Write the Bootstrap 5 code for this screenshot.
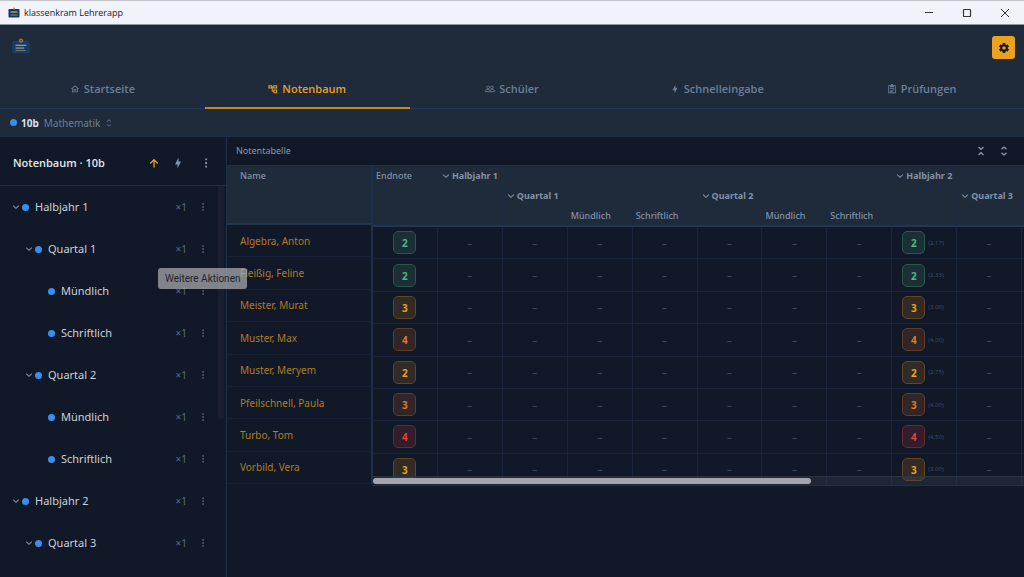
<!DOCTYPE html>
<html lang="de">
<head>
<meta charset="utf-8">
<meta name="viewport" content="width=device-width, initial-scale=1">
<title>klassenkram Lehrerapp</title>
<link href="https://cdn.jsdelivr.net/npm/bootstrap@5.3.0/dist/css/bootstrap.min.css" rel="stylesheet">
<style>
  :root { --bar:#1f2a3a; --ink:#111827; --line:#1d2f4b; --cell:#162135; --muted:#6b7f99; --amber:#e9a11f; --blue:#398feb; }
  body { font-family:"Noto Sans","Open Sans",sans-serif; font-size:11px; line-height:16px; background:var(--ink); color:#cbd1da; }
  .ic { width:12px; height:12px; fill:currentColor; flex:none; display:block; }
  .ic-md { width:10px; height:10px; }
  .ic-sm { width:8px; height:8px; }
  .ghost { background:none; border:0; padding:0; color:inherit; display:flex; align-items:center; justify-content:center; }
  .titlebar { height:25px; background:#f0f3f9; border-top:1px solid #c3c5cb; border-bottom:1px solid #8b9a9f; color:#222; font-family:"Open Sans",sans-serif; font-size:9px; }
  .titlebar .ghost { width:38px; height:22px; color:#333; }
  .topbar, .context { background:var(--bar); }
  .topbar { height:45px; padding:0 9px 0 12px; }
  .gear { width:23px; height:23px; border-radius:3px; background:var(--amber); color:#17191c; padding:0; border:0; }
  .tabs { background:var(--bar); height:39px; border-bottom:1px solid #24345a; }
  .tabs .nav-link { height:39px; padding:1px 0 0; border-bottom:2px solid transparent; border-radius:0; color:var(--muted); font-size:11px; line-height:16px; font-weight:600; gap:4px; font-family:"Open Sans",sans-serif; }
  .tabs .nav-link.active { color:var(--amber); border-color:#c48a1e; }
  .context { height:28px; border-bottom:1px solid var(--line); padding:0 10px; color:var(--muted); font-size:10px; }
  .context strong { color:#dde2ea; }
  .context .ghost { gap:5px; }
  .context .ic { color:#4a5c74; }
  .dot { width:7px; height:7px; border-radius:50%; background:var(--blue); flex:none; }
  .side { width:227px; flex:none; border-right:1px solid var(--line); }
  .side-head { height:49px; border-bottom:1px solid var(--line); padding:3px 8px 0 13px; }
  .side-head h1 { font-size:11px; line-height:16px; font-weight:600; color:#e3e7ed; font-family:"Open Sans",sans-serif; }
  .side-head .ghost { width:24px; height:24px; color:#7f93ab; }
  .side-head .go-up { color:var(--amber); }
  .tree .node { height:42px; padding:0 15px 0 10px; }
  .tree .lvl1 { padding-left:23px; } .tree .lvl2 { padding-left:36px; }
  .tree .fold { width:12px; height:16px; color:#8395ac; }
  .tree .label { margin-left:6px; }
  .weight { color:#5a6c84; font-size:10px; }
  .tree .more { width:16px; height:16px; color:#5a6c84; margin-left:8px; }
  .track { right:2px; top:0; width:6px; height:233px; border-radius:0 0 3px 3px; background:#191f2e; }
  .tip { left:158px; top:131px; height:21px; padding:0 7px; border-radius:3px; background:rgba(176,177,182,.7); color:#22252c; font-family:Roboto,sans-serif; line-height:22px; font-size:10px; z-index:5; white-space:nowrap; }
  .board-head { height:28px; padding:0 9px; color:#8797ad; font-size:9px; }
  .board-head .ghost { width:23px; height:20px; }
  .grades { border-collapse:separate; border-spacing:0; }
  .grades th { font-weight:500; font-size:9px; line-height:12px; color:#8292a9; background:var(--bar); padding:0 3px; white-space:nowrap; }
  .names { width:146px; height:319px; border-top:1px solid var(--line); border-right:2px solid var(--line); }
  .names th.head { height:59px; vertical-align:top; padding:4px 13px; border-bottom:2px solid #23364f; }
  .names td { border-bottom:1px solid var(--cell); padding:0 13px; font-size:10px; line-height:16px; color:#b07d22; }
  .names a { color:inherit; text-decoration:none; }
  .marks { table-layout:fixed; width:714px; height:321px; border-top:1px solid var(--line); }
  .marks th { height:20px; border-right:1px solid #1d2940; border-bottom:1px solid #1d2940; }
  .marks thead tr:last-child th { border-bottom:2px solid #20355c; height:21px; }
  .marks td { border-right:1px solid #18243b; border-bottom:1px solid #18243b; padding:0; font-size:10px; line-height:12px; color:#3c4d64; text-align:center; }
  .marks th .ghost { font-weight:700; gap:2px; padding-left:1px; }
  .grade { width:23px; height:23px; border:1px solid; border-radius:5px; font-size:10px; line-height:23px; font-weight:700; text-align:center; }
  .withavg { padding-left:10px; gap:3px; font-size:6px; }
  .g2 { color:#4bb980; background:#1c2f37; border-color:#255a4a; }
  .g3 { color:#e9a11f; background:#322a25; border-color:#5f4521; }
  .g4 { color:#e07a24; background:#322528; border-color:#633a26; }
  .g5 { color:#de4545; background:#321d2a; border-color:#642a35; }
  .hscroll { left:0; right:0; bottom:0; height:10px; background:rgba(70,80,92,.28); border-top:1px solid #2c3441; }
  .hscroll div { width:438px; height:6px; margin-top:1px; border-radius:3px; background:#a3a6b0; }
</style>
<script src="https://cdn.jsdelivr.net/npm/bootstrap@5.3.0/dist/js/bootstrap.bundle.min.js"></script>
</head>
<body class="d-flex flex-column vh-100 overflow-hidden">
<svg class="d-none">
  <symbol id="home" viewBox="0 0 24 24"><path d="M12 5.700l5 4.500V18h-2v-6H9v6H7v-7.800L12 5.700M12 3L2 12h3v8h6v-6h2v6h6v-8h3L12 3z"/></symbol>
  <symbol id="tree" viewBox="0 0 24 24"><path fill-rule="evenodd" d="M1 3h9v3h3V3h9v8h-9V8.500h-1.500V16H13v-3h9v9h-9v-3.500H9V11H1zm3 2.500v3h3.500v-3zm11.500 0v3h4v-3zm0 10v4h4v-4z"/></symbol>
  <symbol id="people" viewBox="0 0 24 24"><g fill="none" stroke="currentColor" stroke-width="2"><circle cx="7.500" cy="8" r="3.200"/><circle cx="16.500" cy="8" r="3.200"/><path d="M1 18.500v-1.500c0-2.500 3-3.800 6-3.800s4.500 1 5 2.300c.5-1.300 2-2.300 5-2.300s6 1.300 6 3.800v1.500zM12 15.500v3"/></g></symbol>
  <symbol id="bolt" viewBox="0 0 24 24"><path d="M11 15H6l7-14v8h5l-7 14z"/></symbol>
  <symbol id="clip" viewBox="0 0 24 24"><path fill-rule="evenodd" d="M3 3h6a3 3 0 0 1 6 0h6v19H3zm2 2v15h14V5h-2v3H7V5zm2 5h10v2H7zm0 3.500h10v2H7zM7 17h7v1.500H7z"/></symbol>
  <symbol id="gear" viewBox="0 0 24 24"><path d="M12 15.500A3.500 3.500 0 0 1 8.500 12 3.500 3.500 0 0 1 12 8.500a3.500 3.500 0 0 1 3.500 3.500 3.500 3.500 0 0 1-3.500 3.500m7.430-2.530c.04-.32.07-.64.07-.97 0-.33-.03-.66-.07-1l2.110-1.630c.19-.15.24-.42.12-.64l-2-3.460c-.12-.22-.39-.31-.61-.22l-2.490 1c-.52-.39-1.060-.73-1.690-.98l-.37-2.650A.506.506 0 0 0 14 2h-4c-.25 0-.46.18-.5.42l-.37 2.650c-.63.25-1.170.59-1.690.98l-2.490-1c-.22-.09-.49 0-.61.22l-2 3.460c-.13.22-.07.49.12.64L4.570 11c-.04.34-.07.67-.07 1 0 .33.03.65.07.97l-2.110 1.660c-.19.15-.25.42-.12.64l2 3.460c.12.22.39.3.61.22l2.490-1.010c.52.4 1.060.74 1.690.99l.37 2.650c.04.24.25.42.5.42h4c.25 0 .46-.18.5-.42l.37-2.650c.63-.26 1.170-.59 1.690-.99l2.490 1.010c.22.08.49 0 .61-.22l2-3.460c.12-.22.07-.49-.12-.64l-2.110-1.660z"/></symbol>
  <symbol id="up" viewBox="0 0 24 24"><path d="M13.300 21h-2.600V8.500l-5.300 5.300L3.500 12 12 3.500l8.500 8.500-1.900 1.800-5.300-5.300z"/></symbol>
  <symbol id="dots" viewBox="0 0 24 24"><path d="M10 1h4.500v4.500H10zM10 9.700h4.500v4.500H10zM10 18.400h4.500v4.500H10z"/></symbol>
  <symbol id="down" viewBox="0 0 24 24"><path fill="none" stroke="currentColor" stroke-width="3.200" d="M3.500 8l8.500 8 8.500-8"/></symbol>
  <symbol id="expand" viewBox="0 0 24 24"><path fill="none" stroke="currentColor" stroke-width="3.200" d="M6 7.500l6-5 6 5M6 16.500l6 5 6-5"/></symbol>
  <symbol id="collapse" viewBox="0 0 24 24"><path fill="none" stroke="currentColor" stroke-width="3.200" d="M6 2.500l6 5.500 6-5.500M6 21.500l6-5.500 6 5.500"/></symbol>
  <symbol id="logo" viewBox="0 0 20 20"><rect x="1" y="5" width="18" height="12.500" rx="1.200" fill="#193a5e" stroke="#1d4f7c" stroke-width=".7"/><path d="M4 9.200h12M4 12.300h9.500" stroke="#b9c5d3" stroke-width="1"/><path d="M4 15h11" stroke="#8f8064" stroke-width="1"/><circle cx="10" cy="4" r="1.800" fill="#5c5236" stroke="#c18e2c"/></symbol>
  <symbol id="minilogo" viewBox="0 0 12 12"><rect x=".5" y="2" width="11" height="8.500" rx=".8" fill="#173762"/><path d="M2.500 5h7" stroke="#c4d0df"/><path d="M2.500 8h7" stroke="#c99a3d" stroke-width=".8"/><circle cx="6" cy="1.500" r="1.100" fill="#dba133"/></symbol>
</svg>

<header>
  <div class="titlebar d-flex align-items-center ps-1">
    <svg class="ic ms-1 me-1"><use href="#minilogo"/></svg><span>klassenkram Lehrerapp</span>
    <div class="d-flex ms-auto">
      <button class="ghost" aria-label="Minimieren"><svg class="ic" viewBox="0 0 12 12"><path d="M2 5.500h8" stroke="currentColor"/></svg></button>
      <button class="ghost" aria-label="Maximieren"><svg class="ic" viewBox="0 0 12 12"><rect x="2.500" y="2.500" width="7" height="7" rx=".5" fill="none" stroke="currentColor" stroke-width="1.200"/></svg></button>
      <button class="ghost" aria-label="Schließen"><svg class="ic" viewBox="0 0 12 12"><path d="M2 2l8 8M10 2l-8 8" stroke="currentColor"/></svg></button>
    </div>
  </div>
  <div class="topbar d-flex align-items-center justify-content-between">
    <svg width="18" height="18" class="mb-1"><use href="#logo"/></svg>
    <button class="gear d-flex align-items-center justify-content-center" aria-label="Einstellungen"><svg class="ic"><use href="#gear"/></svg></button>
  </div>
  <nav class="tabs nav nav-justified flex-nowrap">
    <a class="nav-link d-flex align-items-center justify-content-center" href="#"><svg class="ic ic-md"><use href="#home"/></svg>Startseite</a>
    <a class="nav-link active d-flex align-items-center justify-content-center" href="#" aria-current="page"><svg class="ic ic-md"><use href="#tree"/></svg>Notenbaum</a>
    <a class="nav-link d-flex align-items-center justify-content-center" href="#"><svg class="ic ic-md"><use href="#people"/></svg>Schüler</a>
    <a class="nav-link d-flex align-items-center justify-content-center" href="#"><svg class="ic ic-md"><use href="#bolt"/></svg>Schnelleingabe</a>
    <a class="nav-link d-flex align-items-center justify-content-center" href="#"><svg class="ic ic-md"><use href="#clip"/></svg>Prüfungen</a>
  </nav>
  <div class="context d-flex align-items-center">
    <span class="dot me-1"></span><button class="ghost"><strong>10b</strong><span>Mathematik</span><svg class="ic ic-sm"><use href="#expand"/></svg></button>
  </div>
</header>

<main class="d-flex flex-grow-1 overflow-hidden position-relative">
  <aside class="side">
    <div class="side-head d-flex align-items-center">
      <h1 class="m-0 me-auto">Notenbaum · 10b</h1>
      <button class="ghost go-up" aria-label="Nach oben"><svg class="ic"><use href="#up"/></svg></button>
      <button class="ghost" aria-label="Schnelleingabe"><svg class="ic"><use href="#bolt"/></svg></button>
      <button class="ghost ms-1" aria-label="Weitere Aktionen"><svg class="ic ic-md"><use href="#dots"/></svg></button>
    </div>
    <div class="position-relative">
      <ul class="tree list-unstyled m-0" id="tree-list"></ul>
      <div class="track position-absolute"></div>
    </div>
  </aside>
  <section class="flex-grow-1 overflow-hidden">
    <div class="board-head d-flex align-items-center">
      <span class="me-auto">Notentabelle</span>
      <button class="ghost" aria-label="Alle einklappen"><svg class="ic ic-md"><use href="#collapse"/></svg></button>
      <button class="ghost" aria-label="Alle ausklappen"><svg class="ic ic-md"><use href="#expand"/></svg></button>
    </div>
    <div class="d-flex align-items-start">
      <table class="grades names flex-shrink-0"><thead><tr><th class="head">Name</th></tr></thead><tbody id="name-rows"></tbody></table>
      <div class="position-relative overflow-hidden flex-grow-1">
        <table class="grades marks">
          <thead>
            <tr><th>Endnote</th><th colspan="7"><button class="ghost"><svg class="ic ic-sm"><use href="#down"/></svg>Halbjahr 1</button></th><th colspan="3"><button class="ghost"><svg class="ic ic-sm"><use href="#down"/></svg>Halbjahr 2</button></th></tr>
            <tr><th></th><th></th><th colspan="3"><button class="ghost"><svg class="ic ic-sm"><use href="#down"/></svg>Quartal 1</button></th><th colspan="3"><button class="ghost"><svg class="ic ic-sm"><use href="#down"/></svg>Quartal 2</button></th><th></th><th colspan="2"><button class="ghost"><svg class="ic ic-sm"><use href="#down"/></svg>Quartal 3</button></th></tr>
            <tr><th></th><th></th><th></th><th>Mündlich</th><th>Schriftlich</th><th></th><th>Mündlich</th><th>Schriftlich</th><th></th><th></th><th></th></tr>
          </thead>
          <tbody id="mark-rows"></tbody>
        </table>
        <div class="hscroll position-absolute"><div></div></div>
      </div>
    </div>
  </section>
  <div class="tip position-absolute" role="tooltip">Weitere Aktionen</div>
</main>
<script>
  const nodes = [[0,'Halbjahr 1'],[1,'Quartal 1'],[2,'Mündlich'],[2,'Schriftlich'],[1,'Quartal 2'],[2,'Mündlich'],[2,'Schriftlich'],[0,'Halbjahr 2'],[1,'Quartal 3']];
  document.getElementById('tree-list').innerHTML = nodes.map(([l, t]) =>
    `<li class="node lvl${l} d-flex align-items-center">${l < 2 ? '<button class="ghost fold" aria-label="Einklappen"><svg class="ic ic-sm"><use href="#down"/></svg></button>' : '<span class="fold"></span>'}<span class="dot"></span><span class="label me-auto">${t}</span><span class="weight">×1</span><button class="ghost more" aria-label="Weitere Aktionen"><svg class="ic ic-sm"><use href="#dots"/></svg></button></li>`).join('');
  const pupils = [['Algebra, Anton',2,'2,17','g2'],['Fleißig, Feline',2,'2,33','g2'],['Meister, Murat',3,'3,00','g3'],['Muster, Max',4,'4,00','g4'],['Muster, Meryem',2,'2,75','g3'],['Pfeilschnell, Paula',3,'4,00','g4'],['Turbo, Tom',4,'4,50','g5'],['Vorbild, Vera',3,'3,00','g3']];
  document.getElementById('name-rows').innerHTML = pupils.map(p => `<tr><td><a href="#">${p[0]}</a></td></tr>`).join('');
  document.getElementById('mark-rows').innerHTML = pupils.map(([, g, avg, c]) =>
    `<tr><td><div class="grade ${c} mx-auto">${g}</div></td>${'<td>–</td>'.repeat(7)}<td><div class="withavg d-flex align-items-center"><div class="grade ${c}">${g}</div>(${avg})</div></td><td>–</td><td></td></tr>`).join('');
</script>
</body>
</html>
